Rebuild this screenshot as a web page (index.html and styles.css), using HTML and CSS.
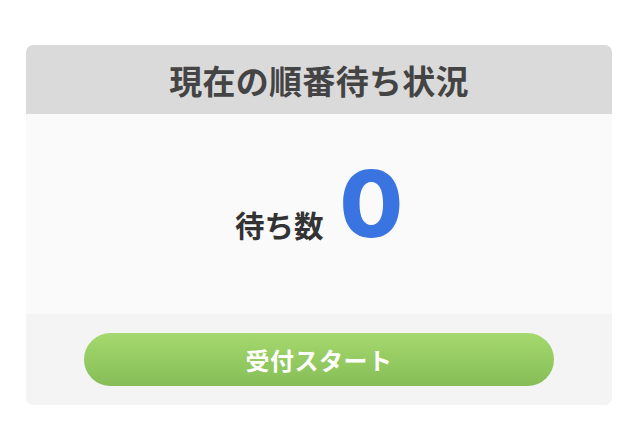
FILE: index.html
```html
<!DOCTYPE html>
<html lang="ja">
<head>
<meta charset="utf-8">
<link rel="stylesheet" href="styles.css">
</head>
<body>
<div class="card">
  <div class="card-header">現在の順番待ち状況</div>
  <div class="card-body">
    <span class="label">待ち数</span>
    <span class="count">0</span>
  </div>
  <div class="card-footer">
    <button class="start-btn">受付スタート</button>
  </div>
</div>
</body>
</html>
```
FILE: styles.css
```css
html, body {
  margin: 0;
  padding: 0;
  background: #ffffff;
}
body {
  font-family: "Noto Sans CJK JP", "Noto Sans", sans-serif;
  padding-top: 45px;
}
.card {
  margin-left: 26px;
  width: 586px;
  border-radius: 7px;
  overflow: hidden;
}
.card-header {
  height: 69px;
  background: #dadada;
  color: #444444;
  font-size: 33px;
  font-weight: 600;
  display: flex;
  align-items: center;
  justify-content: center;
  letter-spacing: 0.3px;
}
.card-body {
  height: 200px;
  background: #fafafa;
  display: flex;
  align-items: baseline;
  justify-content: center;
  gap: 16px;
  box-sizing: border-box;
  padding-top: 44px;
}
.label {
  font-size: 29.5px;
  font-weight: 700;
  color: #333333;
}
.count {
  font-family: Inter, "Liberation Sans", Arial, sans-serif;
  font-size: 92px;
  font-weight: 800;
  color: #3a74e0;
  line-height: 1;
}
.card-footer {
  height: 91px;
  background: #f4f4f4;
  display: flex;
  justify-content: center;
  padding-top: 19px;
  box-sizing: border-box;
}
.start-btn {
  width: 470px;
  height: 53px;
  border: none;
  border-radius: 27px;
  background: linear-gradient(to bottom, #a5d96f, #86bd56);
  color: #ffffff;
  font-family: "Noto Sans CJK JP", "Noto Sans", sans-serif;
  font-size: 24px;
  font-weight: 700;
  letter-spacing: 0.5px;
  padding: 0;
}
```
